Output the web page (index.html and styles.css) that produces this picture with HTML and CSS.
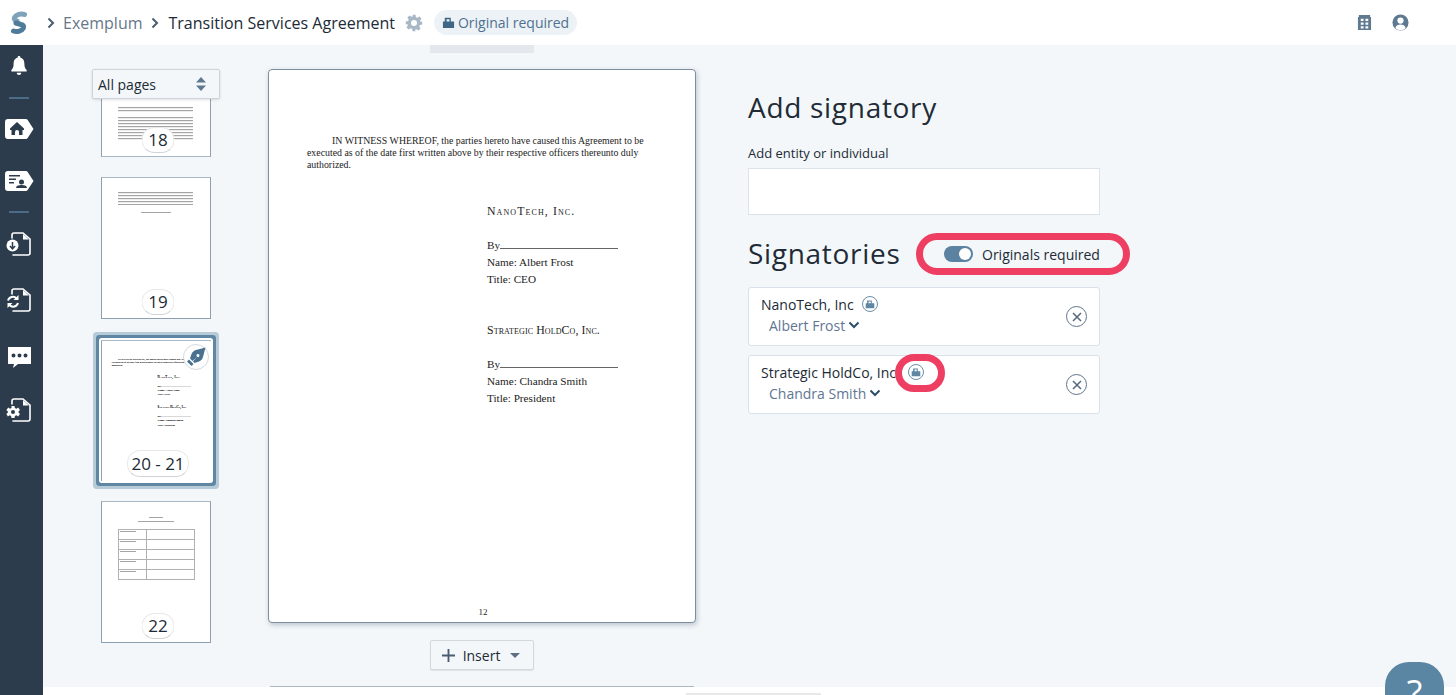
FILE: index.html
```html
<!DOCTYPE html>
<html lang="en">
  <head>
    <meta charset="UTF-8" />
    <meta name="viewport" content="width=device-width, initial-scale=1.0" />
    <title>Transition Services Agreement</title>
    <link rel="stylesheet" href="styles.css">
  </head>
  <body>
    <header class="topbar">
      <svg class="topbar__logo" viewBox="0 0 20 26" width="20" height="26">
        <path d="M15.500 4.500C12 3 7 4.500 5.500 7.500c-.8 1.800.3 3 2.500 3.500" fill="none" stroke="#7ea2b9" stroke-width="5" stroke-linecap="round"/>
        <path d="M4.500 21c3.500 1.500 8.500 0 10-3 .8-1.800-.3-3-2.500-3.500L7 13" fill="none" stroke="#4f7c9a" stroke-width="5" stroke-linecap="round"/>
      </svg>
      <svg class="topbar__chevron" viewBox="0 0 8 12" width="8" height="12"><path d="M1.500 1.500 6 6l-4.500 4.500" fill="none" stroke="#4b5d70" stroke-width="2"/></svg>
      <span class="topbar__crumb">Exemplum</span>
      <svg class="topbar__chevron" viewBox="0 0 8 12" width="8" height="12"><path d="M1.500 1.500 6 6l-4.500 4.500" fill="none" stroke="#4b5d70" stroke-width="2"/></svg>
      <span class="topbar__title">Transition Services Agreement</span>
      <svg class="topbar__gear" viewBox="0 0 24 24" width="18" height="18"><path fill="#a9b8c6" fill-rule="evenodd" d="M10 1h4l.6 3.200 1.900.8 2.700-1.800 2.800 2.800-1.800 2.700.8 1.900L23 10v4l-3.200.6-.8 1.900 1.800 2.700-2.800 2.800-2.700-1.800-1.900.8L14 23h-4l-.6-3.200-1.900-.8-2.700 1.800L2 18l1.800-2.700-.8-1.900L1 14v-4l3.200-.6.8-1.900L3.200 4.800 6 2l2.700 1.800 1.900-.8zM12 8a4 4 0 1 0 0 8 4 4 0 0 0 0-8z"/></svg>
      <span class="pill">
        <svg viewBox="0 0 14 14" width="13" height="13"><path fill="#3f6785" fill-rule="evenodd" d="M1 6h2V2h6.500v4H13v7H1zM5 3.500V6h3V3.500z"/></svg>
        Original required
      </span>
      <span class="topbar__spacer"></span>
      <svg class="topbar__icon" viewBox="0 0 16 18" width="15" height="17"><path fill="#5f7990" fill-rule="evenodd" d="M2 1h12v2h1v14H1V3h1zM4 5v2.500h3V5zm5 0v2.500h3V5zM4 9v2.500h3V9zm5 0v2.500h3V9zM4 13v2.500h3V13zm5 0v2.500h3V13z"/></svg>
      <svg class="topbar__icon" viewBox="0 0 18 18" width="17" height="17"><circle cx="9" cy="9" r="8.500" fill="#5f7990"/><circle cx="9" cy="7" r="3.300" fill="#fff"/><path fill="#fff" d="M3.500 15c.5-3 3-4 5.500-4s5 1 5.500 4a8 8 0 0 1-11 0z"/></svg>
    </header>

    <div class="app">
      <nav class="sidebar">
        <svg class="sidebar__icon sidebar__icon_bell" viewBox="0 0 20 24" width="18" height="24"><path fill="#fff" d="M10 1c1 0 1.600.7 1.600 1.700C15 3.500 16 6.500 16 10c0 3.500 1 5 2.500 6.500V18h-17v-1.500C3 15 4 13.500 4 10c0-3.500 1-6.500 4.400-7.300C8.400 1.700 9 1 10 1zM7.500 19.500h5C12.500 21 11.500 22 10 22s-2.500-1-2.500-2.500z"/></svg>
        <span class="sidebar__divider sidebar__divider_first"></span>
        <svg class="sidebar__icon sidebar__icon_home" viewBox="0 0 29 20" width="29" height="20"><path fill="#fff" fill-rule="evenodd" d="M3 0h18a2 2 0 0 1 1.500.7L28.500 10l-6 9.300A2 2 0 0 1 21 20H3a3 3 0 0 1-3-3V3a3 3 0 0 1 3-3zM12 3 5 9.500V11h1.500v5H10v-3a2 2 0 0 1 4 0v3h3.500v-5H19V9.500z"/></svg>
        <svg class="sidebar__icon sidebar__icon_contact" viewBox="0 0 29 20" width="29" height="20"><path fill="#fff" fill-rule="evenodd" d="M3 0h18a2 2 0 0 1 1.500.7L28.500 10l-6 9.300A2 2 0 0 1 21 20H3a3 3 0 0 1-3-3V3a3 3 0 0 1 3-3zM4 4v1.500h11V4zm0 3.500V9h7V7.500zM4 11v1.500h5V11zm12.500-2.500a2.500 2.500 0 1 0 0 5 2.500 2.500 0 0 0 0-5zM11 17h11c0-2-2-3-5.500-3S11 15 11 17z"/></svg>
        <span class="sidebar__divider"></span>
        <svg class="sidebar__icon sidebar__icon_file" viewBox="0 0 26 24" width="26" height="24"><path fill="none" stroke="#fff" stroke-width="1.600" stroke-linecap="round" d="M6 6V3q0-2 2-2h9l7 6v14q0 2-2 2H7"/><path fill="#fff" d="M17 2v5.500h6z"/><circle cx="6.500" cy="13.500" r="6" fill="#fff"/><path fill="none" stroke="#2c3c4c" stroke-width="1.500" d="M6.500 10v6.500M3.900 14l2.600 2.800L9.100 14"/></svg>
        <svg class="sidebar__icon sidebar__icon_sync" viewBox="0 0 26 24" width="26" height="24"><path fill="none" stroke="#fff" stroke-width="1.600" stroke-linecap="round" d="M6 6V3q0-2 2-2h9l7 6v14q0 2-2 2H7"/><path fill="#fff" d="M17 2v5.500h6z"/><rect x="0" y="7" width="14" height="14" fill="#2c3c4c"/><path fill="none" stroke="#fff" stroke-width="2" d="M2 12.500a5 5 0 0 1 8.500-2M12 15a5 5 0 0 1-8.500 2"/><path fill="#fff" d="M12.500 7v5h-5zM1.500 20v-5h5z"/></svg>
        <svg class="sidebar__icon sidebar__icon_chat" viewBox="0 0 23 21" width="23" height="21"><path fill="#fff" fill-rule="evenodd" d="M0 0h23v17H10l-5 4 1-4H0zM5.500 6.500a2 2 0 1 0 0 4 2 2 0 0 0 0-4zm6 0a2 2 0 1 0 0 4 2 2 0 0 0 0-4zm6 0a2 2 0 1 0 0 4 2 2 0 0 0 0-4z"/></svg>
        <svg class="sidebar__icon sidebar__icon_config" viewBox="0 0 26 24" width="26" height="24"><path fill="none" stroke="#fff" stroke-width="1.600" stroke-linecap="round" d="M6 6V3q0-2 2-2h9l7 6v14q0 2-2 2H7"/><path fill="#fff" d="M17 2v5.500h6z"/><path fill="#fff" fill-rule="evenodd" d="M5.500 8h3l.4 2 1.500.7 1.700-1.100 1.900 2.400-1.500 1.400v1.200l1.500 1.400-1.900 2.400-1.700-1.100-1.500.7-.4 2h-3l-.4-2-1.500-.7-1.700 1.100L.4 16l1.500-1.400v-1.200L.4 12l1.900-2.400 1.700 1.100 1.500-.7zM7 12a2 2 0 1 0 0 4 2 2 0 0 0 0-4z"/></svg>
      </nav>

      <main class="workspace">
        <div class="columns">
          <section class="thumbs">
            <div class="pages-select">
              <span>All pages</span>
              <svg viewBox="0 0 10 14" width="10" height="14"><path fill="#5f7990" d="M5 0l5 5.500H0zM5 14 0 8.500h10z"/></svg>
            </div>
            <div class="thumbs__list">
              <div class="thumb thumb_cut">
                <div class="bars bars_18a"></div>
                <div class="bars bars_18b"></div>
                <span class="thumb__num">18</span>
              </div>
              <div class="thumb">
                <div class="bars bars_19a"></div>
                <div class="bars bars_19b"></div>
                <span class="thumb__num">19</span>
              </div>
              <div class="thumb thumb_active">
                <div class="sheet sheet_mini">
                  <p class="sheet__para">IN WITNESS WHEREOF, the parties hereto have caused this Agreement to be executed as of the date first written above by their respective officers thereunto duly authorized.</p>
                  <div class="sheet__sign">
                    <div class="sheet__entity sheet__entity_wide">NanoTech, Inc.</div>
                    <div class="sheet__by">By</div>
                    <div>Name: Albert Frost</div>
                    <div>Title: CEO</div>
                    <div class="sheet__entity sheet__entity_next">Strategic HoldCo, Inc.</div>
                    <div class="sheet__by">By</div>
                    <div>Name: Chandra Smith</div>
                    <div>Title: President</div>
                  </div>
                </div>
                <span class="thumb__sign">
                  <svg viewBox="0 0 20 20" width="20" height="20"><path fill="#4a7190" fill-rule="evenodd" d="M19.500.5 17 10c-.5 2-2 3.500-4 4.500L8.500 16 4 11.500 5.500 7C6.500 5 8 3.500 10 3zM12 7a1.500 1.500 0 0 0-.8 2.800L6.500 14l.5.500 4.200-4.700A1.500 1.500 0 1 0 12 7zM3 12.500l4.500 4.500-2 2L1 14.500z"/></svg>
                </span>
                <span class="thumb__num thumb__num_wide">20 - 21</span>
              </div>
              <div class="thumb">
                <div class="bars bars_22a"></div>
                <div class="bars bars_22b"></div>
                <div class="mini-table">
                  <span></span><span></span><span></span><span></span><span></span>
                  <span></span><span></span><span></span><span></span><span></span>
                </div>
                <span class="thumb__num">22</span>
              </div>
            </div>
          </section>

          <section class="viewer">
            <div class="ghost-btn"></div>
            <div class="sheet">
              <p class="sheet__para">IN WITNESS WHEREOF, the parties hereto have caused this Agreement to be executed as of the date first written above by their respective officers thereunto duly authorized.</p>
              <div class="sheet__sign">
                <div class="sheet__entity sheet__entity_wide">NanoTech, Inc.</div>
                <div class="sheet__by">By</div>
                <div>Name: Albert Frost</div>
                <div>Title: CEO</div>
                <div class="sheet__entity sheet__entity_next">Strategic HoldCo, Inc.</div>
                <div class="sheet__by">By</div>
                <div>Name: Chandra Smith</div>
                <div>Title: President</div>
              </div>
              <div class="sheet__foot">12</div>
            </div>
            <button class="insert" type="button">
              <svg viewBox="0 0 14 14" width="13" height="13"><path fill="#4b5d70" d="M6 0h2v6h6v2H8v6H6V8H0V6h6z"/></svg>
              <span>Insert</span>
              <i class="insert__caret"></i>
            </button>
            <div class="sheet-next"></div>
          </section>

          <section class="panel">
            <h2 class="panel__title">Add signatory</h2>
            <label class="panel__label">Add entity or individual</label>
            <div class="panel__input"></div>
            <div class="panel__head">
              <h2 class="panel__title">Signatories</h2>
              <div class="originals">
                <span class="toggle"></span>
                <span>Originals required</span>
              </div>
            </div>
            <div class="signer">
              <div class="signer__info">
                <div class="signer__entity">NanoTech, Inc
                  <span class="orig-icon">
                    <svg viewBox="0 0 14 14" width="10" height="10"><path fill="#5f86a3" fill-rule="evenodd" d="M1 6h2V2h6.500v4H13v7H1zM5 3.500V6h3V3.500z"/></svg>
                  </span>
                </div>
                <div class="signer__person">Albert Frost <svg viewBox="0 0 12 8" width="12" height="8"><path d="M1.500 1.500 6 6l4.500-4.500" fill="none" stroke="#2f4f68" stroke-width="2"/></svg></div>
              </div>
              <span class="signer__remove">
                <svg viewBox="0 0 10 10" width="10" height="10"><path d="M1 1l8 8M9 1 1 9" stroke="#53677d" stroke-width="1.500"/></svg>
              </span>
            </div>
            <div class="signer">
              <div class="signer__info">
                <div class="signer__entity">Strategic HoldCo, Inc
                  <span class="orig-icon orig-icon_marked">
                    <svg viewBox="0 0 14 14" width="10" height="10"><path fill="#5f86a3" fill-rule="evenodd" d="M1 6h2V2h6.500v4H13v7H1zM5 3.500V6h3V3.500z"/></svg>
                  </span>
                </div>
                <div class="signer__person">Chandra Smith <svg viewBox="0 0 12 8" width="12" height="8"><path d="M1.500 1.500 6 6l4.500-4.500" fill="none" stroke="#2f4f68" stroke-width="2"/></svg></div>
              </div>
              <span class="signer__remove">
                <svg viewBox="0 0 10 10" width="10" height="10"><path d="M1 1l8 8M9 1 1 9" stroke="#53677d" stroke-width="1.500"/></svg>
              </span>
            </div>
          </section>
        </div>
        <div class="bottom-strip"><span class="bottom-strip__ghost"></span></div>
        <div class="help">?</div>
      </main>
    </div>
  </body>
</html>
```

FILE: styles.css
```css
*,
*::before,
*::after {
  box-sizing: border-box;
}

body {
  margin: 0;
  height: 695px;
  overflow: hidden;
  background: #fff;
  color: #212b36;
  font-family: 'Open Sans', sans-serif;
}

/* top bar */
.topbar {
  display: flex;
  align-items: center;
  height: 45px;
  padding-left: 9px;
  background: #fff;
}
.topbar__logo {
  margin-right: 18px;
}
.topbar__chevron {
  margin-right: 8px;
}
.topbar__crumb {
  font-size: 16px;
  color: #68778a;
  margin-right: 8px;
}
.topbar__title {
  font-size: 16px;
  color: #212b36;
  margin-left: 2px;
  margin-right: 10px;
}
.topbar__gear {
  margin-right: 11px;
}
.topbar__spacer {
  flex: 1;
}
.topbar__icon {
  margin-right: 20px;
}
.topbar__icon:last-child {
  margin-right: 47px;
}
.pill {
  display: flex;
  align-items: center;
  gap: 3px;
  height: 25px;
  padding: 0 8px;
  border-radius: 13px;
  background: #edf2f6;
  color: #4f7190;
  font-size: 14px;
}

.app {
  display: flex;
  height: 650px;
}

/* left nav */
.sidebar {
  display: flex;
  flex-direction: column;
  align-items: center;
  flex: none;
  width: 43px;
  background: #2c3c4c;
  padding: 9px 5px 0 0;
}
.sidebar__icon {
  flex: none;
}
.sidebar__divider {
  flex: none;
  width: 20px;
  height: 2px;
  margin-top: 20px;
  background: #4b6c86;
}
.sidebar__divider_first {
  margin-top: 19px;
}
.sidebar__icon_home {
  margin-top: 20px;
}
.sidebar__icon_contact {
  margin-top: 32px;
}
.sidebar__icon_file {
  margin-top: 19px;
}
.sidebar__icon_sync {
  margin-top: 32px;
}
.sidebar__icon_chat {
  margin-top: 35px;
}
.sidebar__icon_config {
  margin-top: 30px;
}

.workspace {
  position: relative;
  flex: 1;
  background: #f3f7fa;
  overflow: hidden;
}
.columns {
  display: flex;
  height: 642px;
  overflow: hidden;
}

/* thumbnails */
.thumbs {
  flex: none;
  width: 128px;
  margin-left: 49px;
  padding-top: 24px;
}
.pages-select {
  position: relative;
  z-index: 1;
  display: flex;
  align-items: center;
  justify-content: space-between;
  height: 30px;
  padding: 0 13px 0 5px;
  border: 1px solid #ccd3da;
  border-radius: 2px;
  background: #f4f7fa;
  box-shadow: 0 1px 3px rgba(0, 0, 0, 0.12);
  font-size: 14px;
}
.thumbs__list {
  display: flex;
  flex-direction: column;
  align-items: center;
  gap: 20px;
}
.thumb {
  position: relative;
  flex: none;
  width: 110px;
  height: 142px;
  background: #fff;
  border: 1px solid #8da0b2;
  border-top-color: #a9b8c5;
  overflow: hidden;
}
.thumb_cut {
  height: 58px;
  border-top: 0;
  border-bottom-color: #a9b8c5;
}
.thumb_active {
  height: 141px;
  margin-top: 1px;
  overflow: visible;
  box-shadow: 0 0 0 2px #fff, 0 0 0 5px #5f86a3, 0 0 0 8px #b6cad8;
  border-radius: 1px;
}
.thumb__num {
  position: absolute;
  left: calc(50% + 2px);
  bottom: 3px;
  transform: translateX(-50%);
  width: 33px;
  height: 26px;
  border: 1px solid #e6e8ea;
  border-bottom-color: #d0d4d8;
  border-radius: 13px;
  background: #fff;
  font-size: 17px;
  line-height: 24px;
  text-align: center;
}
.thumb__num_wide {
  width: 62px;
  height: 27px;
  line-height: 25px;
}
.thumb__sign {
  position: absolute;
  top: 3px;
  right: 1px;
  display: flex;
  align-items: center;
  justify-content: center;
  width: 26px;
  height: 26px;
  border: 1px solid #d5d9dd;
  border-radius: 50%;
  background: #fff;
}

/* greeked text in the small pages */
.bars {
  position: absolute;
  background: repeating-linear-gradient(#a5a5a5 0 1px, #ededed 1px 2px, #fff 2px 3px);
}
.bars_18a {
  left: 16px;
  top: 8px;
  width: 75px;
  height: 6px;
}
.bars_18b {
  left: 16px;
  top: 18px;
  width: 75px;
  height: 24px;
}
.bars_19a {
  left: 16px;
  top: 14px;
  width: 75px;
  height: 13px;
}
.bars_19b {
  left: 39px;
  top: 34px;
  width: 30px;
  height: 1px;
}
.bars_22a {
  left: 47px;
  top: 15px;
  width: 14px;
  height: 1px;
}
.bars_22b {
  left: 36px;
  top: 19px;
  width: 36px;
  height: 1px;
}
.mini-table {
  position: absolute;
  left: 16px;
  top: 27px;
  display: grid;
  grid-template-columns: 28px 48px;
  grid-auto-rows: 10px;
  border-top: 1px solid #b0b0b0;
  border-left: 1px solid #b0b0b0;
}
.mini-table span {
  position: relative;
  border-right: 1px solid #b0b0b0;
  border-bottom: 1px solid #b0b0b0;
}
.mini-table span:nth-child(odd)::before {
  content: '';
  position: absolute;
  left: 1px;
  top: 1px;
  width: 16px;
  height: 1px;
  background: #a5a5a5;
}

/* page viewer */
.viewer {
  flex: none;
  width: 428px;
  margin-left: 48px;
}
.ghost-btn {
  width: 104px;
  height: 8px;
  margin: 0 auto 16px;
  background: #e4e8ec;
}
.sheet {
  position: relative;
  width: 428px;
  height: 554px;
  padding: 65px 51px 0 38px;
  background: #fff;
  border: 1px solid #7d8ea0;
  border-radius: 4px;
  box-shadow: 1px 2px 5px rgba(60, 80, 100, 0.3);
  font-family: 'Liberation Serif', serif;
  font-size: 9.85px;
  line-height: 12px;
  color: #222;
}
.sheet_mini {
  position: absolute;
  top: 0;
  left: 0;
  border: 0;
  box-shadow: none;
  color: #000;
  text-shadow: 0 0 2px #000;
  transform: scale(0.255);
  transform-origin: 0 0;
}
.sheet__para {
  margin: 0;
  text-indent: 25px;
}
.sheet__sign {
  margin: 32px 0 0 180px;
  font-size: 11.2px;
  line-height: 17px;
}
.sheet__entity {
  font-size: 11.8px;
  font-variant: small-caps;
  letter-spacing: 0.1px;
}
.sheet__entity_wide {
  letter-spacing: 1.1px;
}
.sheet__entity_next {
  margin-top: 34px;
}
.sheet__by {
  margin-top: 17px;
}
.sheet__by::after {
  content: '';
  display: inline-block;
  width: 118px;
  border-bottom: 1px solid #666;
}
.sheet__foot {
  position: absolute;
  left: 0;
  right: 0;
  bottom: 4px;
  text-align: center;
  font-size: 9px;
  padding-left: 2px;
}
.insert {
  display: flex;
  align-items: center;
  justify-content: center;
  gap: 8px;
  width: 104px;
  height: 30px;
  margin: 17px auto 16px;
  padding: 0 2px 0 0;
  border: 1px solid #d3d8dd;
  border-radius: 2px;
  background: #f4f7fa;
  box-shadow: 0 1px 1px rgba(0, 0, 0, 0.08);
  color: #212b36;
  font-family: inherit;
  font-size: 14px;
}
.insert__caret {
  width: 0;
  height: 0;
  margin-left: 2px;
  border-left: 5px solid transparent;
  border-right: 5px solid transparent;
  border-top: 5px solid #5f6f82;
}
.sheet-next {
  width: 424px;
  height: 8px;
  margin: 0 auto;
  background: #aab8c4;
}

/* signatory panel */
.panel {
  flex: none;
  width: 352px;
  margin-left: 52px;
  padding-top: 43px;
}
.panel__title {
  margin: 0;
  font-size: 28px;
  font-weight: 400;
  line-height: 38px;
  letter-spacing: 0.7px;
}
.panel__label {
  display: block;
  margin-top: 18px;
  font-size: 13px;
  line-height: 18px;
}
.panel__input {
  height: 47px;
  margin-top: 6px;
  background: #fff;
  border: 1px solid #dde3ea;
}
.panel__head {
  position: relative;
  display: flex;
  align-items: center;
  margin-top: 19px;
  margin-bottom: 15px;
  height: 38px;
}
.originals {
  position: absolute;
  left: 168px;
  top: -1px;
  display: flex;
  align-items: center;
  gap: 9px;
  width: 214px;
  height: 42px;
  padding-left: 21px;
  border: 7px solid #ee3e62;
  border-radius: 21px;
  font-size: 14px;
}
.toggle {
  position: relative;
  width: 29px;
  height: 16px;
  border-radius: 8px;
  background: #5b82a0;
}
.toggle::after {
  content: '';
  position: absolute;
  top: 2px;
  right: 2px;
  width: 12px;
  height: 12px;
  border-radius: 50%;
  background: #fff;
}
.signer {
  display: flex;
  align-items: center;
  justify-content: space-between;
  height: 59px;
  margin-bottom: 9px;
  padding: 0 12px;
  background: #fff;
  border: 1px solid #d9e1ea;
  border-radius: 3px;
}
.signer__info {
  padding-bottom: 4px;
}
.signer__entity {
  position: relative;
  display: flex;
  align-items: center;
  gap: 8px;
  font-size: 14px;
  line-height: 21px;
}
.signer__person {
  display: flex;
  align-items: center;
  margin-left: 8px;
  font-size: 14px;
  line-height: 21px;
  color: #5f7692;
}
.signer__person svg {
  margin-left: 3px;
}
.orig-icon {
  display: inline-flex;
  align-items: center;
  justify-content: center;
  width: 16px;
  height: 16px;
  border: 1px solid #6a8fab;
  border-radius: 50%;
}
.orig-icon_marked {
  margin-left: 4px;
}
.orig-icon_marked::after {
  content: '';
  position: absolute;
  left: 134px;
  top: -8px;
  width: 50px;
  height: 38px;
  border: 7px solid #ee3e62;
  border-radius: 19px;
}
.signer__remove {
  display: flex;
  align-items: center;
  justify-content: center;
  width: 21px;
  height: 21px;
  border: 1px solid #60748c;
  border-radius: 50%;
}

.bottom-strip {
  height: 8px;
  padding: 6px 0 0 643px;
  background: #fff;
}
.bottom-strip__ghost {
  display: block;
  width: 135px;
  height: 2px;
  background: #e8e8e8;
}
.help {
  position: absolute;
  left: 1342px;
  top: 617px;
  width: 59px;
  height: 60px;
  border-radius: 24px;
  background: #5b86a3;
  color: #fff;
  font-size: 36px;
  line-height: 62px;
  text-align: center;
}
```
